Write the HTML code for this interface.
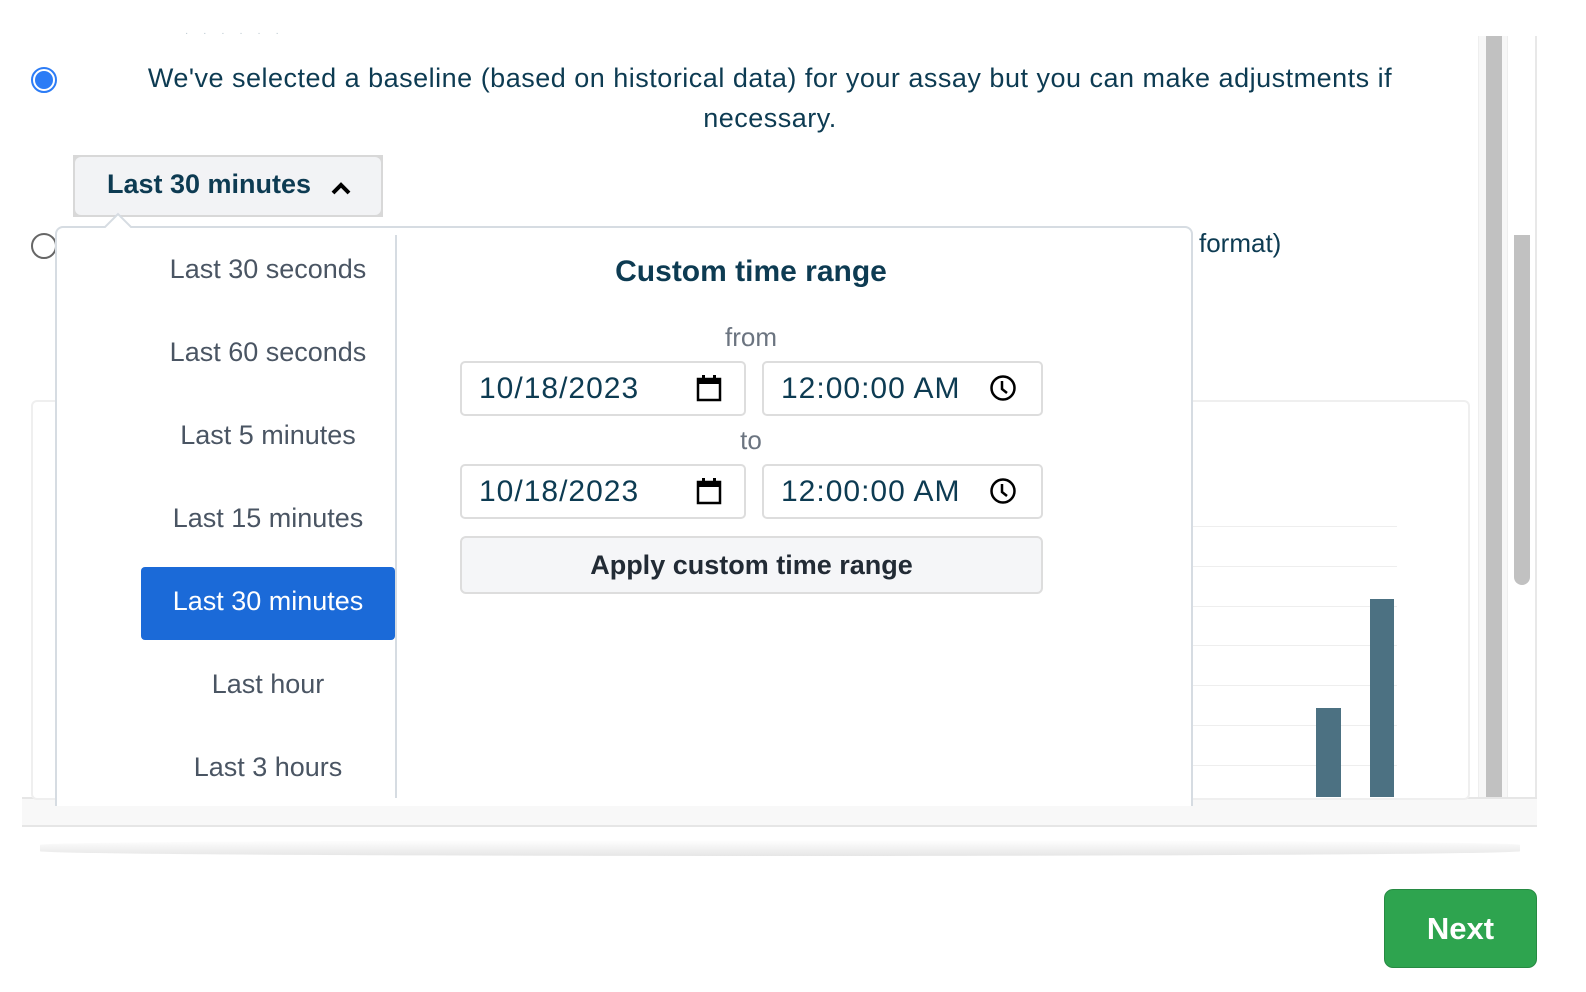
<!DOCTYPE html>
<html><head><meta charset="utf-8"><style>
*{box-sizing:border-box;margin:0;padding:0}
body{width:1586px;height:992px;background:#fff;font-family:"Liberation Sans",sans-serif;position:relative;overflow:hidden;color:#0d3b52}
.abs{position:absolute}
</style></head><body>
<div class="abs" style="left:22px;top:36px;width:1515px;height:790px;border-right:2px solid #e8e8e8"></div>
<div class="abs" style="left:1478px;top:36px;width:30px;height:762px;background:#f7f7f7;border-left:1px solid #eee;border-right:1px solid #eee"></div>
<div class="abs" style="left:1486px;top:36px;width:16px;height:762px;background:#c1c1c1"></div>
<div class="abs" style="left:1514px;top:235px;width:16px;height:350px;background:#c1c1c1;border-radius:0 0 8px 8px"></div>
<div class="abs" style="left:22px;top:797px;width:1515px;height:30px;background:#f8f8f8;border-top:2px solid #e6e6e6;border-bottom:2px solid #e6e6e6"></div>
<div class="abs" style="left:40px;top:840px;width:1480px;height:16px;background:linear-gradient(#fff,#e6e6e6);border-radius:50%/30%"></div>
<div class="abs" style="left:185px;top:28px;font-size:10px;color:#b8c6ce;letter-spacing:6px">· · · · ·  ·</div>
<div class="abs" style="left:31px;top:67px;width:26px;height:26px;border-radius:50%;border:2px solid #2c7cf6;background:#fff"></div>
<div class="abs" style="left:35px;top:71px;width:18px;height:18px;border-radius:50%;background:#2c7cf6"></div>
<div class="abs" style="left:120px;top:58px;width:1300px;text-align:center;font-size:27px;line-height:40px;color:#0d3b52;letter-spacing:0.5px">We've selected a baseline (based on historical data) for your assay but you can make adjustments if necessary.</div>
<div class="abs" style="left:31px;top:233px;width:26px;height:26px;border-radius:50%;border:2px solid #666"></div>
<div class="abs" style="left:1199px;top:228px;font-size:26px;color:#0d3b52">format)</div>
<div class="abs" style="left:31px;top:400px;width:1439px;height:400px;border:2px solid #efefef;border-radius:6px;background:#fff"></div>
<div class="abs" style="left:1190px;top:526px;width:207px;height:1px;background:#eee"></div>
<div class="abs" style="left:1190px;top:566px;width:207px;height:1px;background:#eee"></div>
<div class="abs" style="left:1190px;top:606px;width:207px;height:1px;background:#eee"></div>
<div class="abs" style="left:1190px;top:645px;width:207px;height:1px;background:#eee"></div>
<div class="abs" style="left:1190px;top:685px;width:207px;height:1px;background:#eee"></div>
<div class="abs" style="left:1190px;top:725px;width:207px;height:1px;background:#eee"></div>
<div class="abs" style="left:1190px;top:765px;width:207px;height:1px;background:#eee"></div>
<div class="abs" style="left:1316px;top:708px;width:25px;height:89px;background:#4c7182"></div>
<div class="abs" style="left:1370px;top:599px;width:24px;height:198px;background:#4c7182"></div>
<div class="abs" style="left:73px;top:155px;width:310px;height:62px;background:#d8d8d8;padding:2px">
 <div style="width:100%;height:100%;background:#f2f3f5;border-radius:6px;font-size:27px;font-weight:bold;color:#0d3b52;padding:12px 0 0 32px;position:relative">Last 30 minutes
 <svg style="position:absolute;left:256px;top:24px" width="20" height="14" viewBox="0 0 20 14"><path d="M2 12 L10 4 L18 12" stroke="#000" stroke-width="4" fill="none"/></svg></div>
</div>
<div class="abs" style="left:55px;top:226px;width:1138px;height:580px;background:#fff;border:2px solid #d6dce2;border-bottom:none;border-radius:8px 8px 0 0"></div>
<svg class="abs" style="left:104px;top:212px" width="30" height="16" viewBox="0 0 30 16"><path d="M0 16 L14 2 L28 16" fill="#fff" stroke="#d6dce2" stroke-width="2"/></svg>
<div class="abs" style="left:395px;top:235px;width:2px;height:563px;background:#d6dce2"></div>
<div class="abs" style="left:141px;top:567px;width:254px;height:73px;background:#1b6ad8;border-radius:4px"></div>
<div class="abs" style="left:141px;top:0;width:254px;font-size:27px;color:#4a5563;text-align:center">
 <div class="abs" style="top:254px;width:254px">Last 30 seconds</div>
 <div class="abs" style="top:337px;width:254px">Last 60 seconds</div>
 <div class="abs" style="top:420px;width:254px">Last 5 minutes</div>
 <div class="abs" style="top:503px;width:254px">Last 15 minutes</div>
 <div class="abs" style="top:586px;width:254px;color:#fff">Last 30 minutes</div>
 <div class="abs" style="top:669px;width:254px">Last hour</div>
 <div class="abs" style="top:752px;width:254px">Last 3 hours</div>
</div>
<div class="abs" style="left:460px;top:255px;width:582px;text-align:center;font-size:30px;font-weight:bold;color:#0d3b52">Custom time range</div>
<div class="abs" style="left:460px;top:322px;width:582px;text-align:center;font-size:26px;color:#6b7480">from</div>
<div class="abs" style="left:460px;top:425px;width:582px;text-align:center;font-size:26px;color:#6b7480">to</div>
<div class="abs" style="left:460px;top:361px;width:286px;height:55px;border:2px solid #ddd;border-radius:5px"></div>
<div class="abs" style="left:762px;top:361px;width:281px;height:55px;border:2px solid #ddd;border-radius:5px"></div>
<div class="abs" style="left:460px;top:464px;width:286px;height:55px;border:2px solid #ddd;border-radius:5px"></div>
<div class="abs" style="left:762px;top:464px;width:281px;height:55px;border:2px solid #ddd;border-radius:5px"></div>
<div class="abs" style="left:479px;top:372px;font-size:30px;color:#0d3b52;letter-spacing:1px">10/18/2023</div>
<div class="abs" style="left:479px;top:475px;font-size:30px;color:#0d3b52;letter-spacing:1px">10/18/2023</div>
<div class="abs" style="left:781px;top:372px;font-size:30px;color:#0d3b52;width:185px;overflow:hidden;white-space:nowrap;letter-spacing:1px">12:00:00 AM</div>
<div class="abs" style="left:781px;top:475px;font-size:30px;color:#0d3b52;width:185px;overflow:hidden;white-space:nowrap;letter-spacing:1px">12:00:00 AM</div>
<svg class="abs" style="left:696px;top:374px" width="26" height="28" viewBox="0 0 26 28"><rect x="2" y="5" width="22" height="21" fill="none" stroke="#000" stroke-width="2.5"/><rect x="2" y="5" width="22" height="5" fill="#000"/><rect x="6" y="1" width="3" height="6" fill="#000"/><rect x="17" y="1" width="3" height="6" fill="#000"/></svg>
<svg class="abs" style="left:696px;top:477px" width="26" height="28" viewBox="0 0 26 28"><rect x="2" y="5" width="22" height="21" fill="none" stroke="#000" stroke-width="2.5"/><rect x="2" y="5" width="22" height="5" fill="#000"/><rect x="6" y="1" width="3" height="6" fill="#000"/><rect x="17" y="1" width="3" height="6" fill="#000"/></svg>
<svg class="abs" style="left:989px;top:374px" width="28" height="28" viewBox="0 0 28 28"><circle cx="14" cy="14" r="11.5" fill="none" stroke="#000" stroke-width="2.5"/><path d="M13 7 V15 L18 19" fill="none" stroke="#000" stroke-width="2.5"/></svg>
<svg class="abs" style="left:989px;top:477px" width="28" height="28" viewBox="0 0 28 28"><circle cx="14" cy="14" r="11.5" fill="none" stroke="#000" stroke-width="2.5"/><path d="M13 7 V15 L18 19" fill="none" stroke="#000" stroke-width="2.5"/></svg>
<div class="abs" style="left:460px;top:536px;width:583px;height:58px;background:#f5f6f8;border:2px solid #ddd;border-radius:6px;text-align:center;font-size:27px;font-weight:bold;color:#222b35;line-height:54px">Apply custom time range</div>
<div class="abs" style="left:1384px;top:889px;width:153px;height:79px;background:#2ea44f;border:1px solid #278a43;border-radius:9px;color:#fff;font-size:31px;font-weight:bold;text-align:center;line-height:77px">Next</div>
</body></html>
